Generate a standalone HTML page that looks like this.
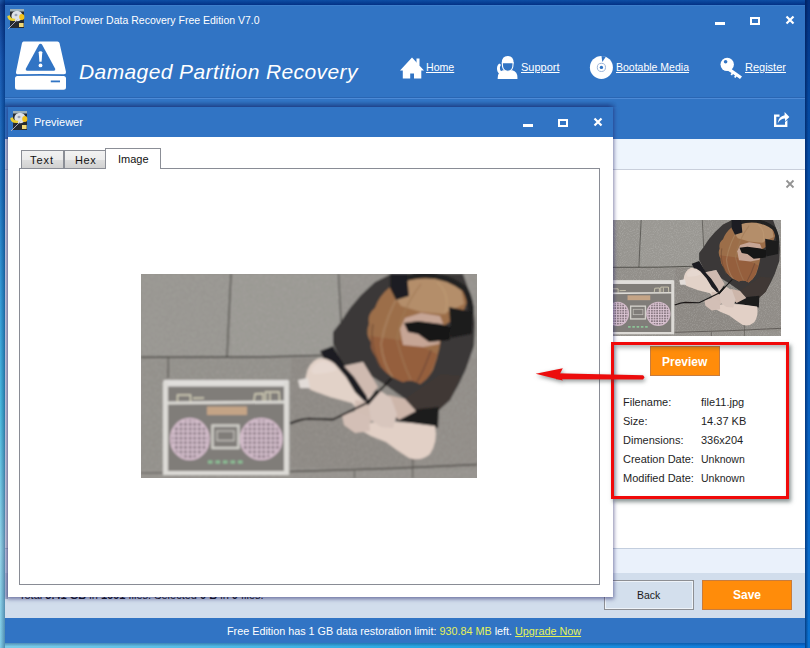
<!DOCTYPE html>
<html><head><meta charset="utf-8">
<style>
*{margin:0;padding:0;box-sizing:border-box}
html,body{width:810px;height:648px;overflow:hidden}
body{position:relative;font-family:"Liberation Sans",sans-serif;background:linear-gradient(#0d4ea5 0,#023185 5px,#0a50b0 60px,#1470c0 190px,#2a98d8 300px,#40b8e0 410px,#90d4ea 550px,#78cce8 648px)}
.a{position:absolute}
.t{position:absolute;white-space:nowrap;line-height:1}
#win{left:5px;top:5px;width:800px;height:638px;background:#fff;overflow:hidden}
.wt{color:#fff;font-size:10.5px}
.nav{color:#fff;font-size:11px;text-decoration:underline}
.lbl{font-size:11px;color:#1e1e1e}
</style></head><body>
<svg width="0" height="0" style="position:absolute">
 <defs>
  <filter id="noise" x="0" y="0" width="336" height="204" filterUnits="userSpaceOnUse"><feTurbulence type="fractalNoise" baseFrequency="0.6" numOctaves="2" seed="3"/><feColorMatrix type="matrix" values="0 0 0 0 0.72  0 0 0 0 0.71  0 0 0 0 0.69  0 0 0 2.5 -1.1"/></filter>
  <filter id="tblur" x="0" y="0" width="336" height="204" filterUnits="userSpaceOnUse"><feGaussianBlur stdDeviation="1.4"/></filter>
  <filter id="soft" x="0" y="0" width="336" height="204" filterUnits="userSpaceOnUse"><feGaussianBlur stdDeviation="1"/></filter>
  <symbol id="appicon" viewBox="0 0 20 22">
    <rect x="3" y="2" width="14" height="19" fill="#262a30"/>
    <rect x="3" y="2" width="14" height="2.5" fill="#9db0b8"/>
    <ellipse cx="10" cy="9" rx="5.6" ry="5.3" fill="#dde2e8"/>
    <ellipse cx="9" cy="8" rx="1.5" ry="1.2" fill="#9aa2b4"/>
    <ellipse cx="14.8" cy="10" rx="2.6" ry="3" fill="#f2c21a"/>
    <path d="M0.3 9 Q0.5 14.5 7.5 14 L8.5 11.8 Q3.5 12 2.8 8.3 Z" fill="#ecd030"/>
    <rect x="12" y="16" width="4.6" height="4" fill="#efd878"/>
    <path d="M1 22 L10.5 12.5" stroke="#b4b4c8" stroke-width="0.9"/>
  </symbol>
  <pattern id="grid" x="0" y="0" width="4.6" height="4.6" patternUnits="userSpaceOnUse"><rect width="4.6" height="4.6" fill="#dcc6d4"/><rect x="1.6" y="1.6" width="3" height="3" fill="#867680"/></pattern>
  <symbol id="photo" viewBox="0 0 336 204">
   <rect width="336" height="204" fill="#95928d"/>
   <g filter="url(#soft)">
    <rect width="336" height="204" fill="#95928d"/>
    <rect x="0" y="0" width="89" height="83" fill="#979590"/>
    <rect x="90" y="0" width="109" height="82" fill="#9a9893"/>
    <rect x="0" y="84" width="336" height="112" fill="#928f8a"/>
    <rect x="150" y="84" width="125" height="110" fill="#8c8883"/>
    <rect x="275" y="84" width="61" height="110" fill="#908c87"/>
    <rect width="336" height="204" filter="url(#noise)" opacity="0.22"/>
    <!-- cracks -->
    <path d="M90 0 L88 40 L86 83" stroke="#4c4a46" stroke-width="1.3" fill="none"/>
    <path d="M197.5 0 L200 48" stroke="#55534f" stroke-width="1.3" fill="none"/>
    <path d="M0 83.3 L120 83 L196 81" stroke="#474541" stroke-width="1.5" fill="none"/>
    <path d="M150 197.5 L250 194.5 L336 190.5" stroke="#4f4b47" stroke-width="1.3" fill="none"/>
    <path d="M0 199 L150 197.5" stroke="#55524e" stroke-width="1" fill="none"/>
    <path d="M271.7 184 L271.7 204 M213.6 197 L213.6 204" stroke="#55524e" stroke-width="1" fill="none"/>
    <path d="M27.5 83 L27 104" stroke="#55534f" stroke-width="1.2" fill="none"/>
    <!-- boombox chalk -->
    <rect x="24" y="110" width="122" height="88" fill="#807d79"/>
    <path d="M24.5 108.5 L146 108.5 L146 199 L24 199 Z" fill="none" stroke="#dddbd7" stroke-width="4"/>
    <path d="M26 129 L144 128" stroke="#dcdad5" stroke-width="2.8"/>
    <rect x="23" y="106" width="124" height="6.5" fill="#e0dedb"/>
    <path d="M24.5 108 L24.5 199 M145.5 108 L145.5 199" stroke="#dcdad6" stroke-width="5"/>
    <path d="M36.5 128 L36.5 121 L49.5 121 L49.5 128 M52 124.3 L63 124" stroke="#d6d2ba" stroke-width="1.4" fill="none"/>
    <path d="M113 127 L114 120 L122 119.5 L122 127 M124.5 127 L124.5 118 L138 118 L138.5 127 M129 119 L129 127" stroke="#d6d2ba" stroke-width="1.4" fill="none"/>
    <rect x="66" y="132.5" width="40" height="8.5" fill="#c4a486"/>
    <ellipse cx="48.8" cy="165" rx="20" ry="21.3" fill="#d4bccb"/>
    <ellipse cx="48.8" cy="165" rx="18" ry="19.3" fill="url(#grid)"/>
    <ellipse cx="120.2" cy="165" rx="21.5" ry="21.3" fill="#d4bccb"/>
    <ellipse cx="120.2" cy="165" rx="19.5" ry="19.3" fill="url(#grid)"/>
    <rect x="71.5" y="151.5" width="26" height="22.5" fill="none" stroke="#d2d0ca" stroke-width="2.4"/>
    <rect x="76" y="157" width="17" height="9.5" fill="none" stroke="#c2c0ba" stroke-width="1.3"/>
    <path d="M67 188 L103 188" stroke="#8cc296" stroke-width="3.2" stroke-dasharray="4.5 3"/>
    <!-- shirt -->
    <path d="M250 0 L322 0 L332 28 L334 50 L333 72 L325 95 L318 110 L309 126 L297 137 L275 138 L264 125 L246 112 L230 102 L222 88 L203 92 L192 70 L192 58 L199 49 L209 34 L220 21 L234 8 Z" fill="#3b3938"/>
    <path d="M300 100 L320 102 L309 126 L297 137 L275 138 L264 125 Z" fill="#403834"/>
    <!-- shorts -->
    <path d="M179 77 L192 72 L204 92 L216 106 L232 123 L227 131 L212 117 L197 101 L184 87 Z" fill="#1e1e20"/>
    <path d="M250 138 L298 133 L297 154 L276 150 L256 147 Z" fill="#1c1c1e"/>
    <!-- left thigh / knee -->
    <path d="M165 102 Q167 89 177 84.5 Q186 83 194 90 L205 103 L214 118 L226 130 L220 139 L211 129 L189 123 L170 116 Q162 110 165 102 Z" fill="#e2d2c8"/>
    <path d="M170 96 Q174 88 182 87 Q190 88 196 96 Q186 100 172 100 Z" fill="#e6d8d0"/>
    <path d="M157 106 L167 104 L169 114 L159 114 Z" fill="#e2dcd8"/>
    <!-- right calf/knee -->
    <path d="M212 152 L240 147 L270 149 L294 152 Q297 168 289 180 Q280 188 268 184 Q255 176 245 168 L230 162 Z" fill="#e2d0c6"/>
    <!-- forearms -->
    <path d="M203 92 L222 88 L237 113 L227 124 L213 103 Z" fill="#cfbab0"/>
    <path d="M247 121 L264 125 L275 137 L258 146 L249 138 Z" fill="#cdb6aa"/>
    <!-- hands & foot -->
    <path d="M214 126 L228 128 L236 140 L228 150 L214 146 Z" fill="#d2beb4"/>
    <path d="M226 122 L238 116 L250 124 L256 140 L252 154 L240 153 L230 146 Z" fill="#d8c6bd"/>
    <path d="M201 141 L215 137 L228 142 L229 157 L214 159 L203 151 Z" fill="#d3bfb6"/>
    <!-- cable / wristband -->
    <path d="M149 149.5 Q160 145 168 144.8 L192 145.6 L228 128 L262 92" stroke="#1a1818" stroke-width="2" fill="none"/>
    <path d="M226 130 L237 117" stroke="#161616" stroke-width="3.5"/>
    <!-- hair -->
    <path d="M264 4 Q285 1 300 3 Q316 7 327 24 Q324 36 318 44 Q306 48 301 54 Q300 74 292 96 Q286 106 279 110 Q270 104 262 108 Q252 104 246 99 Q238 92 236 84 Q229 76 230 68 Q224 60 228 50 Q226 40 234 34 Q238 22 248 14 Q256 6 264 4 Z" fill="#9c6e4a"/>
    <path d="M266 5 L302 4 L320 14 L323 30 L302 40 L280 38 L260 32 L252 20 Z" fill="#b48e6a"/>
    <path d="M229 62 L258 66 L276 70 L296 80 Q292 96 286 104 L279 110 Q270 104 262 108 Q252 104 246 99 Q238 92 236 84 Q229 76 230 68 Z" fill="#955f3e"/>
    <g stroke-width="2" fill="none" opacity="0.55">
     <path d="M262 14 Q245 40 240 70 Q242 90 252 104" stroke="#b08e6a"/>
     <path d="M280 10 Q260 36 256 66 Q262 90 270 106" stroke="#a07a56"/>
     <path d="M296 8 Q310 20 304 40" stroke="#c09c76"/>
     <path d="M232 50 Q228 72 240 94" stroke="#6e4a32"/>
     <path d="M290 76 Q284 94 276 108" stroke="#6a4632"/>
    </g>
    <!-- face -->
    <path d="M259 55 L264 44 L280 39 L299 42 L303 52 L298 70 L282 73 L262 71 Z" fill="#c6a595"/>
    <path d="M263 49 L277 47 L300 50 L310 53 L309 66 L288 68 L277 60 L267 58 Z" fill="#121212"/>
    <!-- headphones -->
    <path d="M262 5 Q296 -6 324 15 Q330 26 330 40" stroke="#222222" stroke-width="6" fill="none"/>
    <path d="M249 0 L266 0 L268 22 L255 26 L249 14 Z" fill="#1f1f21"/>
    <path d="M308 33 L332 38 L331 60 L310 64 Z" fill="#1d1d1f"/>
   </g>
  </symbol>
 </defs>
</svg>

<div class="a" style="left:0;top:0;width:5px;height:648px;background:linear-gradient(90deg,rgba(255,255,255,.08),rgba(0,20,70,.35))"></div>
<div class="a" style="left:805px;top:0;width:5px;height:648px;background:linear-gradient(90deg,rgba(0,20,70,.55),rgba(0,0,0,0) 70%),linear-gradient(#03307f 0,#0448a0 100px,#0858b8 300px,#0a68c8 500px,#0a72d2 648px)"></div>
<div class="a" style="left:5px;top:643px;width:800px;height:5px;background:linear-gradient(rgba(0,30,90,.35),rgba(0,0,0,0) 70%),linear-gradient(90deg,#7ccce8 0,#2aa8e2 400px,#0a70d8 800px)"></div>
<div id="win" class="a">
  <div class="a" style="left:0;top:0;width:800px;height:134px;background:#3174c4"></div>
  <div class="a" style="left:0;top:0;width:800px;height:1px;background:#3d7ecb"></div>
  <div class="a" style="left:0;top:92px;width:800px;height:1px;background:#2a66b3"></div>
  <div class="a" style="left:0;top:93px;width:800px;height:1px;background:#4d8ad6"></div>
  <div class="a" style="left:0;top:134px;width:800px;height:30px;background:#eef5fd"></div>
  <div class="a" style="left:0;top:164px;width:800px;height:1px;background:#c9cfdb"></div>
  <div class="a" style="left:0;top:543px;width:800px;height:1px;background:#c3cede"></div>
  <div class="a" style="left:0;top:544px;width:800px;height:24px;background:#eaf1fb"></div>
  <div class="a" style="left:0;top:568px;width:800px;height:45px;background:#d1ddec"></div>
  <div class="a" style="left:0;top:613px;width:800px;height:25px;background:#3174c4"></div>
</div>

<!-- title bar -->
<svg class="a" style="left:7px;top:7px" width="20" height="22"><use href="#appicon"/></svg>
<div class="t wt" style="left:32px;top:15px">MiniTool Power Data Recovery Free Edition V7.0</div>
<div class="a" style="left:715px;top:22px;width:10px;height:3px;background:#fff"></div>
<div class="a" style="left:750px;top:17px;width:10px;height:8px;border:2px solid #fff"></div>
<svg class="a" style="left:785px;top:15px" width="10" height="10"><path d="M1.5 1.5 L8.5 8.5 M8.5 1.5 L1.5 8.5" stroke="#fff" stroke-width="2.2"/></svg>

<!-- header -->
<svg class="a" style="left:14px;top:40px" width="54" height="52" viewBox="14 40 54 52">
  <path d="M23.5 41.5 L57.5 41.5 Q59 41.5 59.5 43 L66 72 Q66.3 74.3 64 74.3 Q41 73.6 18 74.3 Q15.7 74.3 16 72 L22 43 Q22.5 41.5 23.5 41.5 Z" fill="#fff"/>
  <path d="M15 78.5 Q15 76 17.5 76 Q41 75.3 63.5 76 Q66 76 66 78.5 L66 87.3 Q66 89.8 63.5 89.8 L17.5 89.8 Q15 89.8 15 87.3 Z" fill="#fff"/>
  <rect x="50.8" y="80.5" width="9.2" height="1.8" fill="#3174c4"/>
  <path d="M40.5 43.8 Q41.6 43.8 42.3 45 L55.2 68.8 Q55.8 70.8 53.8 70.8 L27.2 70.8 Q25.2 70.8 25.8 68.8 L38.7 45 Q39.4 43.8 40.5 43.8 Z" fill="#3174c4"/>
  <path d="M38.7 52.3 Q38.7 51.3 40.5 51.3 Q42.3 51.3 42.3 52.3 L41.6 61.8 L39.4 61.8 Z" fill="#fff"/>
  <circle cx="40.5" cy="65.4" r="1.9" fill="#fff"/>
</svg>
<div class="t" style="left:79px;top:61px;color:#fff;font-size:21px;font-style:italic;letter-spacing:0.4px">Damaged Partition Recovery</div>

<!-- nav -->
<svg class="a" style="left:398px;top:56px" width="28" height="24" viewBox="398 56 28 24">
  <path d="M412 57.5 L424 70.5 L421.3 70.5 L421.3 78.5 L414 78.5 L414 73.5 L410.2 73.5 L410.2 78.5 L402.8 78.5 L402.8 70.5 L400 70.5 Z" fill="#fff"/>
  <rect x="416.5" y="58.5" width="3" height="7" fill="#fff"/>
</svg>
<div class="t nav" style="left:426px;top:62px;font-size:10.6px">Home</div>

<svg class="a" style="left:494px;top:53px" width="26" height="28" viewBox="494 53 26 28">
  <path d="M497.7 79 Q497.3 71.8 503 70.3 L512.4 70.3 Q518 71.8 517.4 79 Z" fill="#fff"/>
  <path d="M501.8 63.5 Q501.5 56 507.7 56 Q513.9 56 513.6 63.5 Z" fill="#fff"/>
  <path d="M502.4 62.6 L513 62.6 Q513.6 71 507.7 71.2 Q501.8 71 502.4 62.6 Z" fill="#3174c4" stroke="#fff" stroke-width="1.1"/>
  <path d="M499.2 63.6 Q496 66.5 497.4 71.2 Q499 74.8 503 74.6 L503.4 72.6 Q500.6 72.2 500 69.2 Q499.6 66.6 501 64.8 Z" fill="#fff"/>
</svg>
<div class="t nav" style="left:521px;top:62px">Support</div>

<svg class="a" style="left:588px;top:54px" width="27" height="27" viewBox="588 54 27 27">
  <circle cx="601.4" cy="67.4" r="11.5" fill="#fff"/>
  <path d="M601.5 56 L606 56.5 L602.3 62 Z" fill="#3174c4"/>
  <circle cx="601.4" cy="67.4" r="4.1" fill="none" stroke="#9cb4d8" stroke-width="1"/>
  <circle cx="601.4" cy="67.4" r="1.7" fill="#3174c4"/>
</svg>
<div class="t nav" style="left:616px;top:62px;font-size:10.5px">Bootable Media</div>

<svg class="a" style="left:718px;top:55px" width="26" height="25" viewBox="718 55 26 25">
  <circle cx="727.2" cy="64.4" r="6.7" fill="#fff"/>
  <path d="M730 68 L742 76.5 L740 79 L736.5 76.5 L735.5 78 L734 77 L735 75.5 L733 74 L732 75.5 L730.5 74.5 L731.5 73 L727.5 70.5 Z" fill="#fff"/>
  <circle cx="725.6" cy="61.8" r="1.8" fill="#3174c4"/>
</svg>
<div class="t nav" style="left:745px;top:62px">Register</div>

<!-- share icon -->
<svg class="a" style="left:772px;top:110px" width="20" height="20" viewBox="772 110 20 20">
  <path d="M774 114.5 L779.5 114.5 L779.5 116.8 L776.3 116.8 L776.3 124.7 L785 124.7 L785 122 L787.4 120 L787.4 127 L774 127 Z" fill="#fff"/>
  <path d="M777.6 123.4 Q778.6 116.3 784.6 115.2 L784.6 112 L789.4 117 L785 121.3 L785 118.6 Q780.5 118.6 777.6 123.4 Z" fill="#fff"/>
</svg>

<!-- right panel behind -->
<svg class="a" style="left:785px;top:179px" width="10" height="10"><path d="M1.5 1.5 L8.5 8.5 M8.5 1.5 L1.5 8.5" stroke="#939393" stroke-width="1.8"/></svg>
<svg class="a" style="left:590px;top:220px" width="191" height="116" viewBox="0 0 336 204" preserveAspectRatio="none"><g filter="url(#tblur)"><use href="#photo" width="336" height="204"/></g></svg>

<!-- preview info -->
<div class="a" style="left:650px;top:346px;width:70px;height:30px;background:#ff8c0a;border:1px solid #c77c3e"></div>
<div class="t" style="left:662px;top:356px;color:#fff;font-weight:bold;font-size:12px">Preview</div>
<div class="t lbl" style="left:623px;top:397px">Filename:</div>
<div class="t lbl" style="left:623px;top:416px">Size:</div>
<div class="t lbl" style="left:623px;top:435px">Dimensions:</div>
<div class="t lbl" style="left:623px;top:454px">Creation Date:</div>
<div class="t lbl" style="left:623px;top:473px">Modified Date:</div>
<div class="t lbl" style="left:701px;top:397px">file11.jpg</div>
<div class="t lbl" style="left:701px;top:416px">14.37 KB</div>
<div class="t lbl" style="left:701px;top:435px">336x204</div>
<div class="t lbl" style="left:701px;top:454px;font-size:10.5px">Unknown</div>
<div class="t lbl" style="left:701px;top:473px;font-size:10.5px">Unknown</div>

<!-- bottom -->
<div class="t" style="left:19px;top:590px;font-size:11px;color:#111">Total <b>5.41 GB</b> in <b>1691</b> files. Selected <b>0 B</b> in <b>0</b> files.</div>
<div class="a" style="left:604px;top:580px;width:90px;height:30px;background:#d3dfed;border:1px solid #8d8f94;box-shadow:inset 0 0 0 1px #eef3f9"></div>
<div class="t" style="left:637px;top:590px;font-size:10.5px;color:#1a1a1a">Back</div>
<div class="a" style="left:702px;top:580px;width:90px;height:30px;background:#ff8c0a;border:1px solid #c77c3e"></div>
<div class="t" style="left:733px;top:589px;color:#fff;font-weight:bold;font-size:12px">Save</div>
<div class="t" style="left:227px;top:626px;font-size:10.8px;color:#fff">Free Edition has 1 GB data restoration limit: <span style="color:#e6f25a">930.84 MB</span> left. <span style="color:#e6f25a;text-decoration:underline">Upgrade Now</span></div>

<!-- previewer window -->
<div class="a" style="left:5px;top:101px;width:612px;height:6px;background:linear-gradient(rgba(10,30,90,0),rgba(10,30,90,.4));-webkit-mask-image:linear-gradient(90deg,#000 98.5%,transparent)"></div>
<div class="a" style="left:8px;top:107px;width:605px;height:490px;background:#fff;box-shadow:0 1px 4px 1px rgba(30,30,100,.55)">
  <div class="a" style="left:0;top:0;width:605px;height:30px;background:#3174c4"></div>
</div>
<svg class="a" style="left:10px;top:109px" width="20" height="22"><use href="#appicon"/></svg>
<div class="t wt" style="left:34px;top:117px;font-size:11px">Previewer</div>
<div class="a" style="left:523px;top:124px;width:10px;height:3px;background:#fff"></div>
<div class="a" style="left:558px;top:119px;width:10px;height:8px;border:2px solid #fff"></div>
<svg class="a" style="left:593px;top:117px" width="10" height="10"><path d="M1.5 1.5 L8.5 8.5 M8.5 1.5 L1.5 8.5" stroke="#fff" stroke-width="2.2"/></svg>

<div class="a" style="left:5px;top:137px;width:3px;height:462px;background:linear-gradient(90deg,rgba(60,80,170,.22),rgba(40,40,90,.36))"></div>
<!-- tabs -->
<div class="a" style="left:21px;top:150px;width:43px;height:19px;border:1px solid #8b8e96;border-bottom:none;background:linear-gradient(#f2f2f2,#ebebeb 50%,#dddddd 51%,#cfcfcf)"></div>
<div class="a" style="left:64px;top:150px;width:42px;height:19px;border:1px solid #8b8e96;border-bottom:none;background:linear-gradient(#f2f2f2,#ebebeb 50%,#dddddd 51%,#cfcfcf)"></div>
<div class="a" style="left:19px;top:168px;width:581px;height:417px;border:1px solid #898c95"></div>
<div class="a" style="left:105px;top:148px;width:56px;height:21px;border:1px solid #8b8e96;border-bottom:none;background:#fff"></div>
<div class="t" style="left:30px;top:155px;font-size:11px;color:#111;letter-spacing:1px">Text</div>
<div class="t" style="left:75px;top:155px;font-size:11px;color:#111;letter-spacing:0.6px">Hex</div>
<div class="t" style="left:118px;top:154px;font-size:11px;color:#111">Image</div>

<svg class="a" style="left:141px;top:274px" width="336" height="204" viewBox="0 0 336 204"><use href="#photo" width="336" height="204"/></svg>

<!-- red annotation -->
<div class="a" style="left:611px;top:342px;width:178px;height:157px;border:3.5px solid #f00a0a;box-shadow:2px 3px 4px rgba(40,60,60,.55), inset 2px 3px 4px rgba(40,60,60,.35)"></div>
<svg class="a" style="left:530px;top:360px;overflow:visible" width="120" height="30" viewBox="530 360 120 30">
  <g style="filter:drop-shadow(1.5px 2.5px 2px rgba(50,60,60,.55))">
  <path d="M556 373.2 L643 375.3 Q645.5 377.3 643 379.5 L556 379.2 Z" fill="#ec0c0c"/>
  <path d="M535.6 373.8 L562.8 368.2 L559.6 374.4 L562.8 380.6 Z" fill="#ec0c0c"/>
  </g>
</svg>
</body></html>
